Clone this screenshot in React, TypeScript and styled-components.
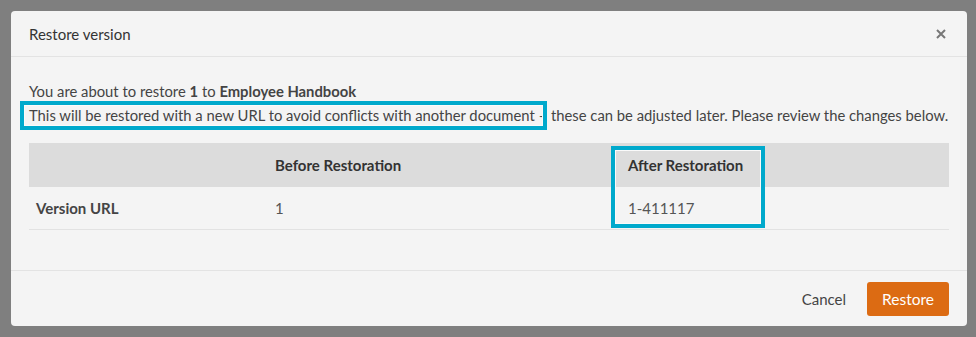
import React from 'react';
import styled, { createGlobalStyle } from 'styled-components';

const GlobalStyle = createGlobalStyle`
	html, body {
		margin: 0;
		padding: 0;
		background: #7f7f7f;
		font-family: Lato, 'Open Sans', sans-serif;
	}
`;

const Backdrop = styled.div`
	width: 976px;
	height: 337px;
	box-sizing: border-box;
	padding: 11px 9px 0 11px;
	background: #7f7f7f;
	overflow: hidden;
`;

const Dialog = styled.div`
	width: 956px;
	height: 315px;
	display: flex;
	flex-direction: column;
	background: #f4f4f4;
	border-radius: 4px;
	color: #444;
`;

const Header = styled.div`
	height: 45px;
	display: flex;
	align-items: center;
	justify-content: space-between;
	padding: 0 18px;
	border-bottom: 1px solid #e3e3e3;
`;

const Title = styled.div`
	font-size: 15px;
	color: #333;
`;

const Close = styled.button`
	border: none;
	background: none;
	padding: 0;
	width: 16px;
	height: 16px;
	display: flex;
	align-items: center;
	justify-content: center;
	cursor: pointer;
`;

const Body = styled.div`
	flex: 1;
	padding: 22px 18px 0;
`;

const Text = styled.p`
	margin: 0;
	font-size: 14.8px;
	line-height: 24px;
	color: #444;
	white-space: nowrap;
`;

const Marked = styled.span`
	position: relative;
	&::after {
		content: '';
		position: absolute;
		left: -9px;
		right: -12px;
		top: -5px;
		bottom: -6px;
		border: 4px solid #00a9cc;
		box-shadow: inset 0 0 0 1px #fafafa;
		pointer-events: none;
	}
`;

const TableWrap = styled.div`
	position: relative;
	margin-top: 16px;
`;

const Table = styled.table`
	width: 920px;
	border-collapse: collapse;
	table-layout: fixed;
	font-size: 15px;
`;

const Th = styled.th<{ w: number }>`
	box-sizing: border-box;
	width: ${({ w }) => w}px;
	height: 44px;
	padding: 0 7px;
	text-align: left;
	font-weight: 700;
	color: #333;
	background: #dcdcdc;
`;

const Td = styled.td<{ bold?: boolean }>`
	height: 42px;
	padding: 0 7px;
	font-weight: ${({ bold }) => (bold ? 700 : 400)};
	color: ${({ bold }) => (bold ? '#444' : '#555')};
	border-bottom: 1px solid #e2e2e2;
`;

const ColumnMark = styled.div`
	position: absolute;
	left: 582px;
	top: 3px;
	width: 154px;
	height: 82px;
	box-sizing: border-box;
	border: 4px solid #00a9cc;
	box-shadow: inset 0 0 0 1px #fafafa;
	pointer-events: none;
`;

const Footer = styled.div`
	height: 56px;
	box-sizing: border-box;
	display: flex;
	align-items: center;
	justify-content: flex-end;
	gap: 21px;
	padding: 1px 18px 0;
	border-top: 1px solid #e3e3e3;
`;

const Cancel = styled.button`
	border: none;
	background: none;
	padding: 0;
	font-family: inherit;
	font-size: 15px;
	color: #444;
	cursor: pointer;
`;

const Primary = styled.button`
	height: 34px;
	width: 82px;
	border: none;
	border-radius: 3px;
	background: #dc6b13;
	color: #fff;
	font-family: inherit;
	font-size: 15.5px;
	cursor: pointer;
`;

export default function App() {
	return (
		<>
			<GlobalStyle />
			<Backdrop>
				<Dialog>
					<Header>
						<Title>Restore version</Title>
						<Close aria-label="Close">
							<svg width="10" height="10" viewBox="0 0 10 10">
								<path d="M1 1 L9 9 M9 1 L1 9" stroke="#777" strokeWidth="2" />
							</svg>
						</Close>
					</Header>
					<Body>
						<Text>
							You are about to restore <b>1</b> to <b>Employee Handbook</b>
						</Text>
						<Text>
							<Marked>This will be restored with a new URL to avoid conflicts with another document</Marked> –
							these can be adjusted later. Please review the changes below.
						</Text>
						<TableWrap>
							<Table>
								<thead>
									<tr>
										<Th w={239} />
										<Th w={353}>Before Restoration</Th>
										<Th w={328}>After Restoration</Th>
									</tr>
								</thead>
								<tbody>
									<tr>
										<Td bold>Version URL</Td>
										<Td>1</Td>
										<Td>1-411117</Td>
									</tr>
								</tbody>
							</Table>
							<ColumnMark />
						</TableWrap>
					</Body>
					<Footer>
						<Cancel>Cancel</Cancel>
						<Primary>Restore</Primary>
					</Footer>
				</Dialog>
			</Backdrop>
		</>
	);
}
